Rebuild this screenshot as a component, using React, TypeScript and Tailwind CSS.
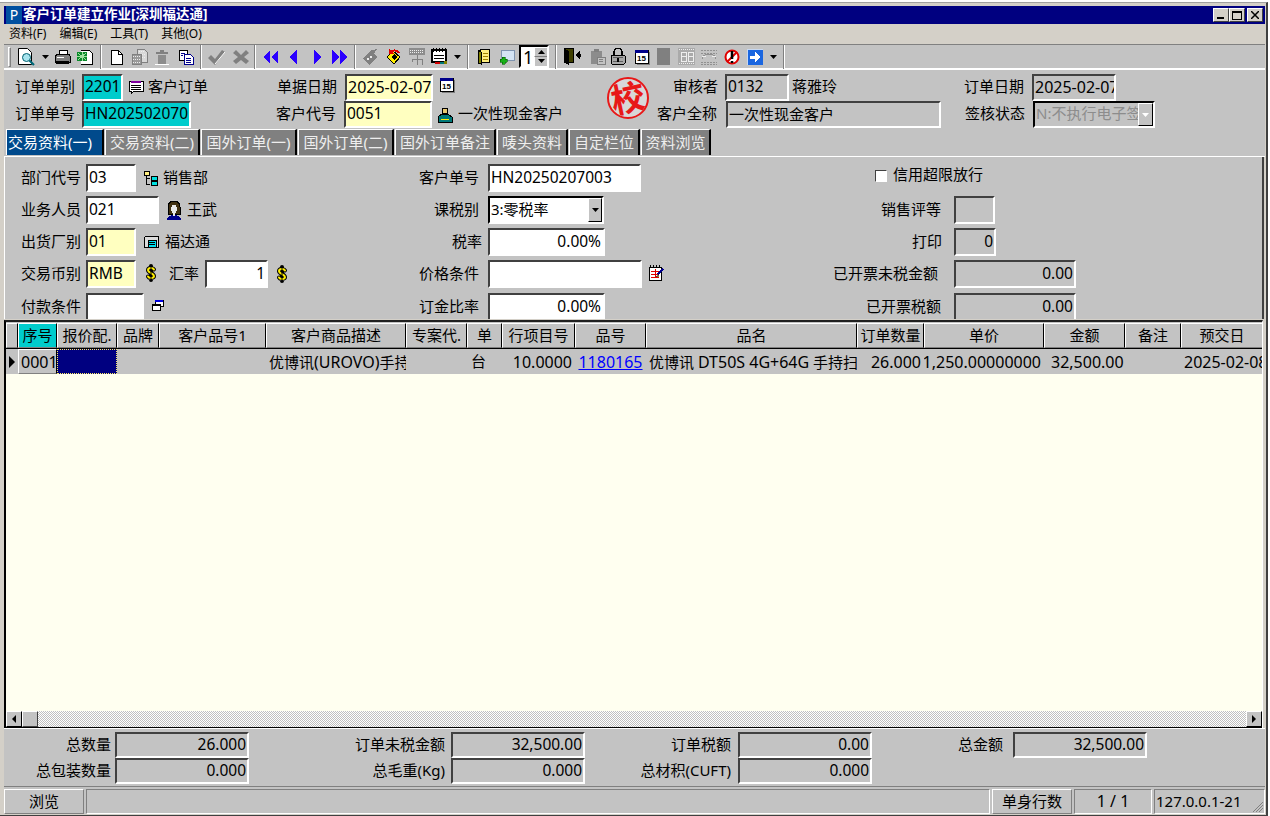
import React from "react";

const inset = "border-2 border-t-[#404040] border-l-[#404040] border-r-white border-b-white";

function Box({ c = "", tone = "gray", right = false, children }: { c?: string; tone?: string; right?: boolean; children?: React.ReactNode }) {
  const bg = tone === "teal" ? "bg-[#00cccc]" : tone === "yellow" ? "bg-[#ffffc0]" : tone === "white" ? "bg-white" : "bg-[#c3c3c3]";
  return (
    <div className={`${inset} ${bg} ${c} flex items-center overflow-hidden whitespace-nowrap text-[15.5px] pb-[1px] ${right ? "justify-end pr-[1px]" : "pl-[1px]"}`}>
      {children}
    </div>
  );
}

function Lab({ c = "", children }: { c?: string; children: React.ReactNode }) {
  return <div className={`${c} text-right whitespace-nowrap text-[15px] leading-none pb-[2px] shrink-0`}>{children}</div>;
}

function T({ c, children }: { c: string; children: React.ReactNode }) {
  return <div className={`${c} flex items-center shrink-0`}>{children}</div>;
}

const Sep = () => <div className="w-[2px] h-[24px] border-l border-l-[#808080] border-r border-r-white" />;
const DD = () => (
  <svg width="7" height="4" viewBox="0 0 7 4"><path d="M0 0h7L3.5 4z" fill="#000" /></svg>
);
const S = ({ w = 16, h = 16, children }: { w?: number; h?: number; children: React.ReactNode }) => (
  <svg width={w} height={h} viewBox={`0 0 ${w} ${h}`} shapeRendering="crispEdges">{children}</svg>
);

const Cal = () => (
  <S>
    <rect x="1" y="1" width="13" height="13" fill="#fff" stroke="#000" />
    <rect x="1" y="1" width="13" height="3" fill="#00008b" />
    <path d="M15 3v12H3" stroke="#808080" fill="none" />
    <text x="7.5" y="12" fontSize="8" textAnchor="middle" fontWeight="700" fontFamily="Liberation Sans" fill="#000">15</text>
  </S>
);
const Gray = ({ w, h, children }: { w: number; h: number; children: React.ReactNode }) => <S w={w} h={h}>{children}</S>;

const Coin = () => (
  <svg width="12" height="18" viewBox="0 0 12 18">
    <path d="M9 5.5C8 3.5 3 3.5 3 6.2S9 9.3 9 12C9 14.5 4 14.5 3 12.5M6 2v14" stroke="#000" fill="none" strokeWidth="4" strokeLinecap="round" />
    <path d="M9 5.5C8 3.5 3 3.5 3 6.2S9 9.3 9 12C9 14.5 4 14.5 3 12.5" stroke="#ffee00" fill="none" strokeWidth="2" strokeLinecap="round" />
    <path d="M6 3v12" stroke="#000" strokeWidth="1" />
  </svg>
);

function Toolbar() {
  return (
    <div className="h-[26px] flex items-center border-t border-t-[#808080] border-b-2 border-b-white bg-[#c3c3c3]">
      <T c="ml-[4px]"><div className="w-[3px] h-[20px] border border-[#808080] border-l-white border-t-white" /></T>
      <T c="ml-[7px]">
        <svg width="17" height="18" viewBox="0 0 17 18">
          <path d="M.5.5h9l4 4v12H.5z" fill="#fff" stroke="#000" />
          <circle cx="8.5" cy="9.5" r="4" fill="#a8e4ee" stroke="#006070" />
          <path d="M11.5 12.5l4.5 4.5" stroke="#006878" strokeWidth="2.2" />
        </svg>
      </T>
      <T c="ml-[7px]"><DD /></T>
      <T c="ml-[5px]">
        <S w={17} h={16}>
          <path d="M5 1h8v5H5z" fill="#fff" stroke="#000" />
          <path d="M1 7l3-2h11l1 2v6H1z" fill="#808080" stroke="#000" />
          <path d="M2 12h13v3H2z" fill="#000" />
          <path d="M3 8h7" stroke="#fff" />
        </S>
      </T>
      <T c="ml-[6px]">
        <S>
          <path d="M4 1h8l3 3v11H4" fill="#fff" stroke="#000" />
          <rect x="0" y="3" width="10" height="9" fill="#0a8a2a" />
          <path d="M1 4l8 7M9 4l-8 7M5 3v9M0 7.5h10" stroke="#9fe09f" />
        </S>
      </T>
      <T c="ml-[7px]"><Sep /></T>
      <T c="ml-[8px]">
        <S w={13} h={16}><path d="M1 1h7l4 4v10H1z" fill="#fff" stroke="#000" /><path d="M8 1v4h4" fill="none" stroke="#000" /></S>
      </T>
      <T c="ml-[8px]">
        <Gray w={17} h={17}>
          <path d="M6 1h7l3 3v10H6z" fill="#d8d8d8" stroke="#808080" />
          <path d="M1 6h9v10H1z" fill="#9a9a9a" stroke="#808080" />
          <path d="M2 8h7M2 11h7M2 14h7M8 3h6M11 6h4M11 9h4" stroke="#eee" strokeDasharray="1 1" />
        </Gray>
      </T>
      <T c="ml-[7px]">
        <Gray w={14} h={16}>
          <path d="M5 1h4v2h4v2H1V3h4z" fill="#808080" />
          <path d="M3 6h8v9H3z" fill="#8c8c8c" />
          <path d="M0 15h14" stroke="#fff" />
        </Gray>
      </T>
      <T c="ml-[9px]">
        <S>
          <path d="M1 1h8v10H1z" fill="#fff" stroke="#000" />
          <path d="M6 5h6l3 3v7H6z" fill="#fff" stroke="#00008b" />
          <path d="M3 4h4M3 6h2M8 9h5M8 11h5M8 13h5" stroke="#00008b" />
        </S>
      </T>
      <T c="ml-[6px]"><Sep /></T>
      <T c="ml-[5px]">
        <svg width="18" height="16" viewBox="0 0 18 16"><path d="M1 9l3-3 4 4 7-9 3 2-10 13z" fill="#808080" /><path d="M8 15L18 3" stroke="#fff" /></svg>
      </T>
      <T c="ml-[8px]">
        <svg width="16" height="16" viewBox="0 0 16 16"><path d="M3 1l5 5 5-5 3 3-5 4 5 4-3 3-5-4-5 4-3-3 5-4-5-4z" fill="#808080" /></svg>
      </T>
      <T c="ml-[5px]"><Sep /></T>
      <T c="ml-[7px]"><S w={15} h={14}><path d="M7 0v14L0 7zM15 0v14L8 7z" fill="#2a00ff" /></S></T>
      <T c="ml-[11px]"><S w={8} h={14}><path d="M8 0v14L0 7z" fill="#2a00ff" /></S></T>
      <T c="ml-[17px]"><S w={8} h={14}><path d="M0 0v14l8-7z" fill="#2a00ff" /></S></T>
      <T c="ml-[10px]"><S w={15} h={14}><path d="M0 0v14l7-7zM8 0v14l7-7z" fill="#2a00ff" /></S></T>
      <T c="ml-[7px]"><Sep /></T>
      <T c="ml-[7px]">
        <S w={15} h={16}>
          <path d="M9 1l5-1-3 5 3 3-7 8-7-6 7-8z" fill="#808080" />
          <circle cx="5" cy="10" r="1" fill="#eee" /><circle cx="8" cy="8" r="1" fill="#eee" />
        </S>
      </T>
      <T c="ml-[8px]">
        <S w={15} h={16}>
          <path d="M1 8l6-6 7 6-6 7z" fill="#ffee00" stroke="#000" />
          <path d="M5 8l3-3 3 3-3 3z" fill="#000" />
          <path d="M5 3a5 5 0 0 1 8 1" stroke="#e00000" strokeWidth="2" fill="none" />
          <path d="M3 0v5h5" fill="#e00000" />
        </S>
      </T>
      <T c="ml-[8px]">
        <Gray w={16} h={18}>
          <rect x="0" y="0" width="16" height="7" fill="#8c8c8c" />
          <path d="M1 2h14M1 4h14" stroke="#eee" strokeDasharray="1 1" />
          <path d="M8 7v4M3 11h10v6M3 11v3M8 11v6" stroke="#808080" fill="none" />
        </Gray>
      </T>
      <T c="ml-[6px]">
        <S w={17} h={17}>
          <path d="M1 2h14v12H1z" fill="#fff" stroke="#000" strokeWidth="1.4" />
          <path d="M2 0v4M5 0v4M8 0v4M11 0v4M14 0v4" stroke="#000" />
          <path d="M3 7h10M3 10h10" stroke="#000" />
          <path d="M4 14h5v2H4z" fill="#d00000" /><path d="M9 14h4v2H9z" fill="#007878" /><path d="M13 13h3v3h-3z" fill="#808000" />
        </S>
      </T>
      <T c="ml-[6px]"><DD /></T>
      <T c="ml-[6px]"><Sep /></T>
      <T c="ml-[8px]">
        <S w={13} h={17}>
          <path d="M1 3l5-2h6v13H3z" fill="#ffee80" stroke="#000" />
          <path d="M1 3v12l3 1V4z" fill="#808000" stroke="#000" />
          <path d="M6 5h5M6 8h5M6 11h5" stroke="#a08000" />
        </S>
      </T>
      <T c="ml-[8px]">
        <S w={17} h={16}>
          <path d="M3 1h13v10H8l-3 3v-3H3z" fill="#d4e4f4" stroke="#7f94b0" />
          <path d="M2 10h2V8h3v2h2v3H7v2H4v-2H2z" fill="#18b018" stroke="#006000" strokeWidth=".6" />
        </S>
      </T>
      <T c="ml-[4px]">
        <div className="flex items-stretch w-[30px] h-[23px] border-2 border-t-black border-l-black border-r-white border-b-white bg-white">
          <div className="flex-1 text-[18px] leading-[20px] pl-[2px] text-black">1</div>
          <div className="w-[13px] bg-[#c3c3c3] flex flex-col">
            <div className="h-1/2 flex items-center justify-center border-t border-l border-white border-b border-b-[#808080]"><svg width="7" height="4"><path d="M0 4h7L3.5 0z" /></svg></div>
            <div className="h-1/2 flex items-center justify-center border-l border-white"><DD /></div>
          </div>
        </div>
      </T>
      <T c="ml-[6px]"><div className="flex gap-[1px]"><Sep /></div></T>
      <T c="ml-[6px]">
        <S w={18} h={17}>
          <path d="M1 0h9v14H1z" fill="#404000" stroke="#000" />
          <path d="M1 0l5 3v14l-5-3z" fill="#000" />
          <path d="M12 7l5-4v3h1v3h-1v3z" fill="#000" />
        </S>
      </T>
      <T c="ml-[9px]">
        <Gray w={16} h={17}>
          <path d="M1 3h11v13H1z" fill="#8c8c8c" />
          <path d="M4 1h5v3H4z" fill="#808080" />
          <path d="M7 9h8v7H7z" fill="#c3c3c3" stroke="#808080" />
          <path d="M9 11h4M9 13h4" stroke="#808080" />
        </Gray>
      </T>
      <T c="ml-[4px]">
        <S w={16} h={17}>
          <path d="M4 7V4a4 4 0 0 1 8 0v3" fill="none" stroke="#000" strokeWidth="1.5" />
          <rect x="1" y="7" width="14" height="9" rx="1" fill="#a8a8a8" stroke="#000" />
          <path d="M3 9h10M3 13h10" stroke="#606060" />
          <rect x="7" y="10" width="2" height="4" fill="#000" />
        </S>
      </T>
      <T c="ml-[8px]"><Cal /></T>
      <T c="ml-[7px]"><div className="w-[13px] h-[17px] bg-[#808080]" /></T>
      <T c="ml-[8px]">
        <Gray w={17} h={17}>
          <rect x="0" y="0" width="17" height="17" fill="#aaa" />
          <path d="M1 1h15M1 15h15" stroke="#eee" strokeDasharray="1 1" />
          <path d="M3 4h5v9H3zM10 4h5v9h-5zM3 8h5M10 8h5" stroke="#eee" fill="none" />
        </Gray>
      </T>
      <T c="ml-[6px]">
        <Gray w={16} h={17}>
          <path d="M0 2h16M0 5h16M0 14h16M0 16h16" stroke="#909090" strokeDasharray="2 1" />
          <path d="M1 11a7 5 0 0 1 14 0" stroke="#909090" fill="none" />
          <path d="M1 8h4M11 8h4" stroke="#eee" />
        </Gray>
      </T>
      <T c="ml-[7px]">
        <svg width="16" height="16" viewBox="0 0 16 16">
          <circle cx="8" cy="8" r="6.5" fill="#fff" stroke="#e00000" strokeWidth="2" />
          <path d="M3 13L13 3" stroke="#e00000" strokeWidth="2" />
          <path d="M8 2v8M8 12v2" stroke="#000" strokeWidth="2.5" />
        </svg>
      </T>
      <T c="ml-[7px]">
        <S>
          <rect x="0" y="0" width="16" height="16" fill="#1a66e0" stroke="#c8d8f0" />
          <path d="M3 6.5h5V3l5 5-5 5V9.5H3z" fill="#fff" />
        </S>
      </T>
      <T c="ml-[7px]"><DD /></T>
      <T c="ml-[6px]"><Sep /></T>
    </div>
  );
}

function Header() {
  return (
    <div className="relative h-[58px] bg-[#c3c3c3] flex flex-col pt-[4px]">
      <div className="flex items-center h-[27px]">
        <Lab c="ml-[11px] w-[60px]">订单单别</Lab>
        <Box c="ml-[7px] w-[41px] h-[27px]" tone="teal">2201</Box>
        <div className="ml-[5px] shrink-0">
          <S>
            <path d="M1 1h14v10H6l-3 3v-3H1z" fill="#fff" stroke="#000" />
            <path d="M3 2h10" stroke="#8000a0" strokeWidth="1.5" />
            <path d="M3 5h10M3 7h10M3 9h10" stroke="#000" />
          </S>
        </div>
        <Lab c="ml-[4px] w-[60px]">客户订单</Lab>
        <Lab c="ml-[69px] w-[60px]">单据日期</Lab>
        <Box c="ml-[8px] w-[88px] h-[27px]" tone="yellow"><span className="text-[16px]">2025-02-07</span></Box>
        <div className="ml-[6px] -mt-[6px] shrink-0"><Cal /></div>
        <Lab c="ml-[218px] w-[43px]">审核者</Lab>
        <Box c="ml-[9px] w-[64px] h-[27px]">0132</Box>
        <Lab c="ml-[3px] w-[45px]">蒋雅玲</Lab>
        <Lab c="ml-[127px] w-[60px]">订单日期</Lab>
        <Box c="ml-[8px] w-[84px] h-[27px]"><span className="text-[16px]">2025-02-07</span></Box>
      </div>
      <div className="flex items-center h-[27px]">
        <Lab c="ml-[11px] w-[60px]">订单单号</Lab>
        <Box c="ml-[7px] w-[109px] h-[27px]" tone="teal">HN202502070</Box>
        <Lab c="ml-[85px] w-[60px]">客户代号</Lab>
        <Box c="ml-[8px] w-[88px] h-[27px]" tone="yellow">0051</Box>
        <div className="ml-[5px] shrink-0">
          <S>
            <circle cx="8" cy="4" r="3" fill="#e8c870" stroke="#000" />
            <path d="M1 15V10l4-3h6l4 3v5z" fill="#007878" stroke="#000" />
            <path d="M4 12h8" stroke="#ffee00" />
          </S>
        </div>
        <Lab c="ml-[5px] w-[104px]">一次性现金客户</Lab>
        <Lab c="ml-[95px] w-[60px]">客户全称</Lab>
        <Box c="ml-[9px] w-[215px] h-[27px]"><span className="text-[15px]">一次性现金客户</span></Box>
        <Lab c="ml-[24px] w-[60px]">签核状态</Lab>
        <div className={`ml-[8px] w-[122px] h-[27px] bg-[#c3c3c3] flex items-center border-2 border-t-black border-l-black border-r-white border-b-white`}>
          <div className="flex-1 overflow-hidden whitespace-nowrap text-[15px] text-[#8c8c8c] pl-[1px] pb-[2px]">N:不执行电子签核</div>
          <div className="w-[15px] h-full shrink-0 flex items-center justify-center border border-white border-r-black border-b-black bg-[#c3c3c3]">
            <svg width="7" height="4"><path d="M0 0h7L3.5 4z" fill="#fff" /></svg>
          </div>
        </div>
      </div>
      <div className="absolute left-[603px] top-[7px] w-[42px] h-[42px] rounded-full border-2 border-[#e81818] bg-[#d8d8d8] flex items-center justify-center text-[#e81818] text-[34px] leading-none font-bold overflow-hidden">
        <span className="-rotate-12">校</span>
      </div>
    </div>
  );
}

function Tab({ c, active = false, children }: { c: string; active?: boolean; children: React.ReactNode }) {
  return (
    <div className={`${c} h-[26px] flex items-center justify-center whitespace-nowrap text-[15px] border-l border-t border-r-2 border-white border-r-black ${active ? "bg-[#004a8c] text-white pr-[9px]" : "bg-[#808080] text-[#eeeeee]"}`}>
      {children}
    </div>
  );
}

function Tabs() {
  return (
    <div className="h-[29px] bg-[#c3c3c3] flex items-end pl-[2px] gap-[1px] pb-[1px] border-b border-b-white">
      <Tab c="w-[98px]" active>交易资料(一)</Tab>
      <Tab c="w-[95px]">交易资料(二)</Tab>
      <Tab c="w-[96px]">国外订单(一)</Tab>
      <Tab c="w-[96px]">国外订单(二)</Tab>
      <Tab c="w-[101px]">国外订单备注</Tab>
      <Tab c="w-[71px]">唛头资料</Tab>
      <Tab c="w-[71px]">自定栏位</Tab>
      <Tab c="w-[70px]">资料浏览</Tab>
    </div>
  );
}

function Form() {
  return (
    <div className="h-[162px] shrink-0 bg-[#c3c3c3] flex border-l border-l-white border-r-2 border-r-[#404040] overflow-hidden pt-[7px] mr-[1px] relative">
      {/* left column */}
      <div className="w-[395px] flex flex-col gap-[4px] shrink-0">
        <div className="flex items-center h-[28px] shrink-0">
          <Lab c="ml-[16px] w-[60px]">部门代号</Lab>
          <Box c="ml-[5px] w-[50px] h-[28px]" tone="white">03</Box>
          <div className="ml-[7px]">
            <S>
              <rect x="1" y="1" width="5" height="4" fill="#ffee80" stroke="#000" />
              <path d="M3 5v9h4M3 8h4" stroke="#000" fill="none" />
              <rect x="8" y="6" width="6" height="4" fill="#00e0e0" stroke="#000" />
              <rect x="8" y="11" width="6" height="4" fill="#00e0e0" stroke="#000" />
            </S>
          </div>
          <Lab c="ml-[4px] w-[45px]">销售部</Lab>
        </div>
        <div className="flex items-center h-[28px] shrink-0">
          <Lab c="ml-[16px] w-[60px]">业务人员</Lab>
          <Box c="ml-[5px] w-[73px] h-[28px]" tone="white">021</Box>
          <div className="ml-[7px]">
            <S h={20}>
              <path d="M2 7C2 3 4 1 8 1s6 2 6 6v7H2z" fill="#403010" stroke="#000" />
              <ellipse cx="8" cy="9" rx="3" ry="4" fill="#e8e8e8" />
              <path d="M1 20c0-3 3-5 7-5s7 2 7 5z" fill="#00008b" />
              <path d="M7 13h2v3H7z" fill="#e8e8e8" />
            </S>
          </div>
          <Lab c="ml-[5px] w-[30px]">王武</Lab>
        </div>
        <div className="flex items-center h-[28px] shrink-0">
          <Lab c="ml-[16px] w-[60px]">出货厂别</Lab>
          <Box c="ml-[5px] w-[50px] h-[28px]" tone="yellow">01</Box>
          <div className="ml-[7px]">
            <S h={14}>
              <path d="M3 1h12v11H1V3z" fill="#dcdcdc" stroke="#000" />
              <rect x="5" y="5" width="8" height="7" fill="#00e0f0" stroke="#000" />
              <path d="M6 7h6M6 9h6" stroke="#000" />
            </S>
          </div>
          <Lab c="ml-[6px] w-[45px]">福达通</Lab>
        </div>
        <div className="flex items-center h-[28px] shrink-0">
          <Lab c="ml-[16px] w-[60px]">交易币别</Lab>
          <Box c="ml-[5px] w-[50px] h-[28px]" tone="yellow">RMB</Box>
          <div className="ml-[9px] -mt-[3px]"><Coin /></div>
          <Lab c="ml-[12px] w-[30px]">汇率</Lab>
          <Box c="ml-[6px] w-[63px] h-[28px]" tone="white" right>1</Box>
          <div className="ml-[8px]"><Coin /></div>
        </div>
        <div className="flex items-center h-[28px] mt-[1px] shrink-0">
          <Lab c="ml-[16px] w-[60px]">付款条件</Lab>
          <Box c="ml-[5px] w-[58px] h-[28px]" tone="white" />
          <div className="ml-[7px] -mt-[4px]">
            <S w={13} h={12}>
              <rect x="4" y="1" width="8" height="6" fill="#fff" stroke="#000" />
              <rect x="4" y="1" width="8" height="2" fill="#0000e0" />
              <rect x="1" y="5" width="8" height="6" fill="#fff" stroke="#000" />
              <rect x="1" y="5" width="8" height="2" fill="#000" />
            </S>
          </div>
        </div>
      </div>
      {/* middle column */}
      <div className="w-[363px] flex flex-col gap-[4px] shrink-0">
        <div className="flex items-center h-[28px] shrink-0">
          <Lab c="ml-[19px] w-[60px]">客户单号</Lab>
          <Box c="ml-[9px] w-[153px] h-[28px]" tone="white">HN20250207003</Box>
        </div>
        <div className="flex items-center h-[28px] shrink-0">
          <Lab c="ml-[19px] w-[60px]">课税别</Lab>
          <div className="ml-[9px] w-[116px] h-[28px] bg-white border-2 border-t-black border-l-black border-r-white border-b-white flex items-center">
            <div className="flex-1 text-[15px] pl-[1px] pb-[2px]">3:零税率</div>
            <div className="w-[14px] h-[24px] bg-[#c3c3c3] border border-white border-r-black border-b-black flex items-center justify-center"><DD /></div>
          </div>
        </div>
        <div className="flex items-center h-[28px] shrink-0">
          <Lab c="ml-[19px] w-[63px]">税率</Lab>
          <Box c="ml-[6px] w-[117px] h-[28px]" tone="white" right><span className="mr-[1px]">0.00%</span></Box>
        </div>
        <div className="flex items-center h-[28px] shrink-0">
          <Lab c="ml-[19px] w-[60px]">价格条件</Lab>
          <Box c="ml-[9px] w-[154px] h-[28px]" tone="white" />
          <div className="ml-[6px] -mt-[3px]">
            <S h={17}>
              <path d="M1 3h12v13H1z" fill="#fff" stroke="#000" />
              <path d="M2 1v3M5 1v3M8 1v3M11 1v3" stroke="#000" />
              <path d="M3 7h8M3 10h8M3 13h8M7 5v9" stroke="#e00000" />
              <path d="M9 10l5-6 2 1-5 6z" fill="#00008b" />
              <path d="M8 13l2-2 1 1z" fill="#ffee00" stroke="#000" strokeWidth=".5" />
            </S>
          </div>
        </div>
        <div className="flex items-center h-[28px] mt-[1px] shrink-0">
          <Lab c="ml-[19px] w-[60px]">订金比率</Lab>
          <Box c="ml-[9px] w-[117px] h-[28px]" tone="white" right><span className="mr-[1px]">0.00%</span></Box>
        </div>
      </div>
      {/* right column */}
      <div className="flex-1 flex flex-col gap-[4px]">
        <div className="flex items-center h-[28px] shrink-0">
          <div className="ml-[112px] w-[12px] h-[12px] bg-white border border-t-[#404040] border-l-[#404040] border-r-white border-b-white -mt-[5px]" />
          <Lab c="ml-[6px] w-[90px] -mt-[5px]">信用超限放行</Lab>
        </div>
        <div className="flex items-center h-[28px] shrink-0">
          <Lab c="ml-[118px] w-[60px]">销售评等</Lab>
          <Box c="ml-[13px] w-[41px] h-[28px]" />
        </div>
        <div className="flex items-center h-[28px] shrink-0">
          <Lab c="ml-[118px] w-[61px]">打印</Lab>
          <Box c="ml-[12px] w-[42px] h-[28px]" right>0</Box>
        </div>
        <div className="flex items-center h-[28px] shrink-0">
          <Lab c="ml-[60px] w-[115px]">已开票未税金额</Lab>
          <Box c="ml-[16px] w-[122px] h-[28px]" right>0.00</Box>
        </div>
        <div className="flex items-center h-[28px] mt-[1px] shrink-0">
          <Lab c="ml-[100px] w-[78px]">已开票税额</Lab>
          <Box c="ml-[13px] w-[122px] h-[28px]" right>0.00</Box>
        </div>
      </div>
    </div>
  );
}

const cols = "grid grid-cols-[12px_39px_60px_42px_107px_140px_61px_35px_73px_71px_211px_67px_120px_81px_56px_82px]";

function Hd({ c = "", children }: { c?: string; children?: React.ReactNode }) {
  return (
    <div className={`${c} h-[25px] flex items-center justify-center whitespace-nowrap overflow-hidden text-[15px] border-t border-l border-white border-r border-r-[#000] border-b border-b-[#808080]`}>
      {children}
    </div>
  );
}

function Cell({ c = "", children }: { c?: string; children?: React.ReactNode }) {
  return <div className={`${c} h-[25px] flex items-center whitespace-nowrap overflow-hidden text-[15px]`}>{children}</div>;
}

function Grid() {
  return (
    <div className="flex-1 min-h-0 flex flex-col border-t-2 border-t-[#202020] border-l-2 border-l-black border-r border-r-white mr-[2px] bg-[#fffff0] mt-[1px]">
      <div className="flex-1 min-h-0 overflow-hidden">
        <div className={`${cols} bg-[#c3c3c3] border-b border-b-black pt-[1px]`}>
          <Hd />
          <Hd c="bg-[#00cccc]">序号</Hd>
          <Hd>报价配.</Hd>
          <Hd>品牌</Hd>
          <Hd>客户品号1</Hd>
          <Hd>客户商品描述</Hd>
          <Hd>专案代.</Hd>
          <Hd>单</Hd>
          <Hd>行项目号</Hd>
          <Hd>品号</Hd>
          <Hd>品名</Hd>
          <Hd>订单数量</Hd>
          <Hd>单价</Hd>
          <Hd>金额</Hd>
          <Hd>备注</Hd>
          <Hd>预交日</Hd>
        </div>
        <div className={`${cols} bg-[#c3c3c3]`}>
          <Cell c="justify-center"><svg width="6" height="12"><path d="M0 0v12l6-6z" /></svg></Cell>
          <Cell c="border-t border-l border-white border-r border-r-black border-b border-b-[#808080] text-[16px] pl-[2px]">0001</Cell>
          <Cell c="bg-[#000080] border border-dotted border-[#ffee66]" />
          <Cell />
          <Cell />
          <Cell c="pl-[3px]"><span>优博讯<span className="text-[16px]">(UROVO)</span>手持终端</span></Cell>
          <Cell />
          <Cell c="pl-[4px]">台</Cell>
          <Cell c="justify-end pr-[3px] text-[16px]">10.0000</Cell>
          <Cell c="justify-center text-[16px] text-[#0000ff] underline">1180165</Cell>
          <Cell c="pl-[3px]"><span>优博讯 <span className="text-[16px]">DT50S 4G+64G</span> 手持扫描终端</span></Cell>
          <Cell c="justify-end pr-[3px] text-[16px]">26.000</Cell>
          <Cell c="justify-end pr-[3px] text-[16px]">1,250.00000000</Cell>
          <Cell c="pl-[7px] text-[16px]">32,500.00</Cell>
          <Cell />
          <Cell c="pl-[3px] text-[16px]">2025-02-08</Cell>
        </div>
      </div>
      <div className="h-[17px] shrink-0 flex items-stretch border-b border-b-black">
        <div className="w-[16px] bg-[#c3c3c3] border border-white border-r-black border-b-black flex items-center justify-center">
          <svg width="4" height="8"><path d="M4 0v8L0 4z" /></svg>
        </div>
        <div className="w-[16px] bg-[#c3c3c3] border border-white border-r-[#404040] border-b-[#404040]" />
        <div className="flex-1 bg-[repeating-conic-gradient(#c0c0c0_0_25%,#ffffff_0_50%)] bg-[length:2px_2px]" />
        <div className="w-[16px] bg-[#c3c3c3] border border-white border-r-black border-b-black flex items-center justify-center">
          <svg width="4" height="8"><path d="M0 0v8l4-4z" /></svg>
        </div>
      </div>
    </div>
  );
}

function Footer() {
  const B = "w-[134px] h-[26px]";
  return (
    <div className="h-[59px] shrink-0 bg-[#c3c3c3] border-t border-t-white pt-[3px] flex flex-col border-b border-b-[#808080]">
      <div className="flex items-center h-[26px]">
        <Lab c="w-[107px]">总数量</Lab>
        <Box c={`ml-[4px] ${B}`} right>26.000</Box>
        <Lab c="ml-[62px] w-[134px]">订单未税金额</Lab>
        <Box c={`ml-[6px] ${B}`} right>32,500.00</Box>
        <Lab c="ml-[39px] w-[107px]">订单税额</Lab>
        <Box c={`ml-[7px] ${B}`} right>0.00</Box>
        <Lab c="ml-[85px] w-[46px]">总金额</Lab>
        <Box c={`ml-[10px] ${B}`} right>32,500.00</Box>
      </div>
      <div className="flex items-center h-[26px]">
        <Lab c="w-[107px]">总包装数量</Lab>
        <Box c={`ml-[4px] ${B}`} right>0.000</Box>
        <Lab c="ml-[62px] w-[134px]">总毛重(Kg)</Lab>
        <Box c={`ml-[6px] ${B}`} right>0.000</Box>
        <Lab c="ml-[39px] w-[107px]">总材积(CUFT)</Lab>
        <Box c={`ml-[7px] ${B}`} right>0.000</Box>
      </div>
    </div>
  );
}

function Status() {
  const p = "h-[25px] border border-t-[#808080] border-l-[#808080] border-r-white border-b-white flex items-center justify-center whitespace-nowrap text-[15px] shrink-0";
  return (
    <div className="h-[27px] shrink-0 bg-[#c3c3c3] flex items-center gap-[2px] pt-[1px]">
      <div className="w-[80px] h-[25px] border border-t-white border-l-white border-r-[#808080] border-b-[#808080] flex items-center justify-center text-[15px] shrink-0">浏览</div>
      <div className={`${p} flex-1`} />
      <div className="w-[80px] h-[25px] border border-t-white border-l-white border-r-[#808080] border-b-[#808080] flex items-center justify-center text-[15px] shrink-0">单身行数</div>
      <div className={`${p} w-[78px] text-[16px]`}>1 / 1</div>
      <div className={`${p} w-[111px] relative justify-start pl-[1px] text-[15.5px]`}>
        127.0.0.1-21
        <svg className="absolute right-0 bottom-0" width="12" height="12"><path d="M11 1L1 11M11 4L4 11M11 7L7 11" stroke="#808080" /></svg>
      </div>
    </div>
  );
}

export default function App() {
  return (
    <div className="w-[1270px] h-[816px] bg-white font-['Noto_Sans','Noto_Sans_CJK_SC',sans-serif] text-black overflow-hidden">
      <div className="w-[1268px] h-[815px] mt-[2px] border-t border-t-[#a0a0a0] border-r-2 border-r-[#404040] border-b-2 border-b-[#404040] bg-[#d4d0c8] pt-[3px] pl-[4px] pr-[1px] pb-[1px] flex flex-col">
        <div className="h-[18px] shrink-0 bg-[#000080] flex items-center text-white">
          <div className="ml-[2px] w-[16px] h-[18px] bg-[#0050a0] text-[14px] leading-[18px] text-center">P</div>
          <div className="ml-[1px] text-[13.5px] font-bold leading-none whitespace-nowrap flex-1">客户订单建立作业[深圳福达通]</div>
          <div className="flex gap-[0px] mr-[2px]">
            <div className="w-[16px] h-[14px] bg-[#d4d0c8] border border-white border-r-[#404040] border-b-[#404040] flex items-end justify-start pl-[3px] pb-[2px]"><div className="w-[7px] h-[2px] bg-black" /></div>
            <div className="w-[16px] h-[14px] bg-[#d4d0c8] border border-white border-r-[#404040] border-b-[#404040] flex items-center justify-center"><div className="w-[10px] h-[9px] border border-black border-t-2" /></div>
            <div className="ml-[2px] w-[16px] h-[14px] bg-[#d4d0c8] border border-white border-r-[#404040] border-b-[#404040] flex items-center justify-center">
              <svg width="8" height="8"><path d="M0 0l8 8M8 0L0 8" stroke="#000" strokeWidth="1.5" /></svg>
            </div>
          </div>
        </div>
        <div className="h-[20px] shrink-0 flex items-center gap-[13px] pl-[5px] text-[12px] leading-none">
          <span>资料(F)</span>
          <span>编辑(E)</span>
          <span>工具(T)</span>
          <span>其他(O)</span>
        </div>
        <Toolbar />
        <Header />
        <Tabs />
        <Form />
        <Grid />
        <Footer />
        <Status />
      </div>
    </div>
  );
}
